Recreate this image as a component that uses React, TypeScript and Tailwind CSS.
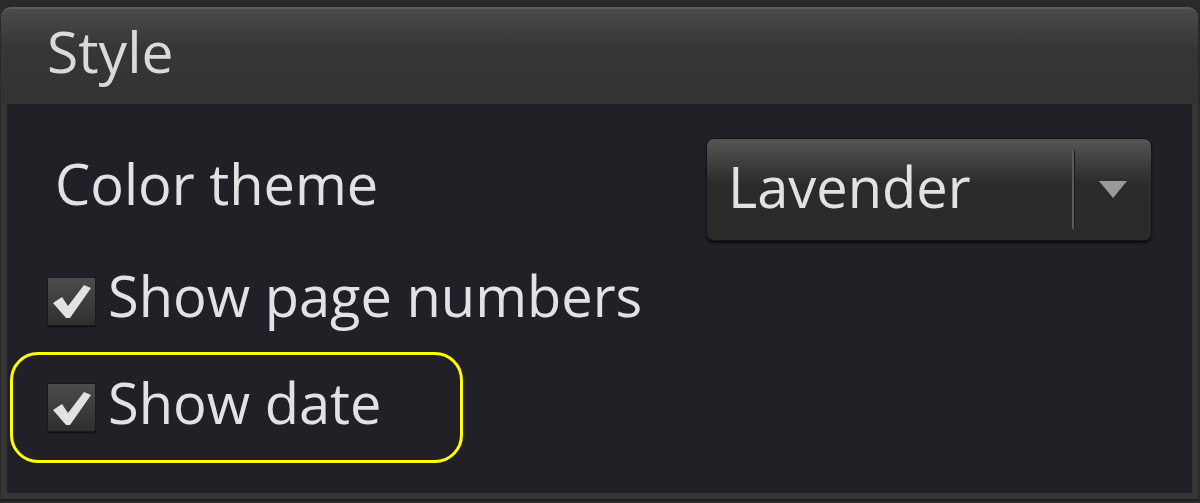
import React from "react";

function Check() {
  return (
    <div className="w-[49px] h-[49px] rounded-[2px] border border-[#1a1a1a] bg-gradient-to-b from-[#4c4c4c] to-[#2f2f2f] flex items-center justify-center shadow-[0_1px_1px_rgba(0,0,0,0.6)]">
      <svg width="40" height="36" viewBox="0 0 40 36">
        <path d="M1 20 L10 14 L16 23 L32 2 L39 5 L18 35 L14 35 Z" fill="#e2e2e2" />
      </svg>
    </div>
  );
}

export default function App() {
  return (
    <div
      className="w-[1200px] h-[503px] bg-[#2a2a2a] pt-[7px] overflow-hidden"
      style={{ fontFamily: '"Open Sans", "Noto Sans", sans-serif' }}
    >
      <div className="ml-[1px] mr-[2px] h-[494px] rounded-t-[10px] bg-[#363636] flex flex-col border-b-[2px] border-[#1e1e1e]">
        <div className="h-[97px] rounded-t-[10px] border-t-[2px] border-[#5c5c5c] bg-gradient-to-b from-[#4b4b4b] via-[#363636] via-40% to-[#333333] flex items-center pl-[46px] pb-[10px]">
          <span className="text-[57px] leading-none text-[#dadada]">Style</span>
        </div>
        <div className="flex-1 ml-[6px] mr-[6px] mb-[6px] bg-[#212027] flex flex-col">
          <div className="flex items-center justify-between pl-[48px] pr-[40px] pt-[34px]">
            <span className="text-[56px] leading-none text-[#e2e2e2] pb-[14px]">Color theme</span>
            <div className="w-[446px] h-[103px] rounded-[8px] border border-[#161616] bg-gradient-to-b from-[#555555] via-[#2b2b2b] via-45% to-[#2a2a2a] flex items-center shadow-[0_2px_2px_rgba(0,0,0,0.7)]">
              <span className="flex-1 pl-[21px] text-[56px] leading-none text-[#e2e2e2] pb-[8px]">Lavender</span>
              <div className="w-[3px] h-[79px] bg-[#5a5a5a] border-r border-[#1a1a1a]" />
              <div className="w-[76px] flex justify-center">
                <svg width="28" height="18" viewBox="0 0 28 18">
                  <path d="M0 0 L28 0 L14 17 Z" fill="#9a9a9a" />
                </svg>
              </div>
            </div>
          </div>
          <div className="flex items-center gap-[12px] pl-[40px] pt-[26px]">
            <Check />
            <span className="text-[56px] leading-none text-[#e2e2e2] pb-[12px]">Show page numbers</span>
          </div>
          <div className="ml-[3px] mt-[17px] w-[453px] h-[111px] rounded-[28px] border-[3px] border-[#ffff00] flex items-center gap-[12px] pl-[34px]">
            <Check />
            <span className="text-[56px] leading-none text-[#e2e2e2] pb-[12px]">Show date</span>
          </div>
        </div>
      </div>
    </div>
  );
}
